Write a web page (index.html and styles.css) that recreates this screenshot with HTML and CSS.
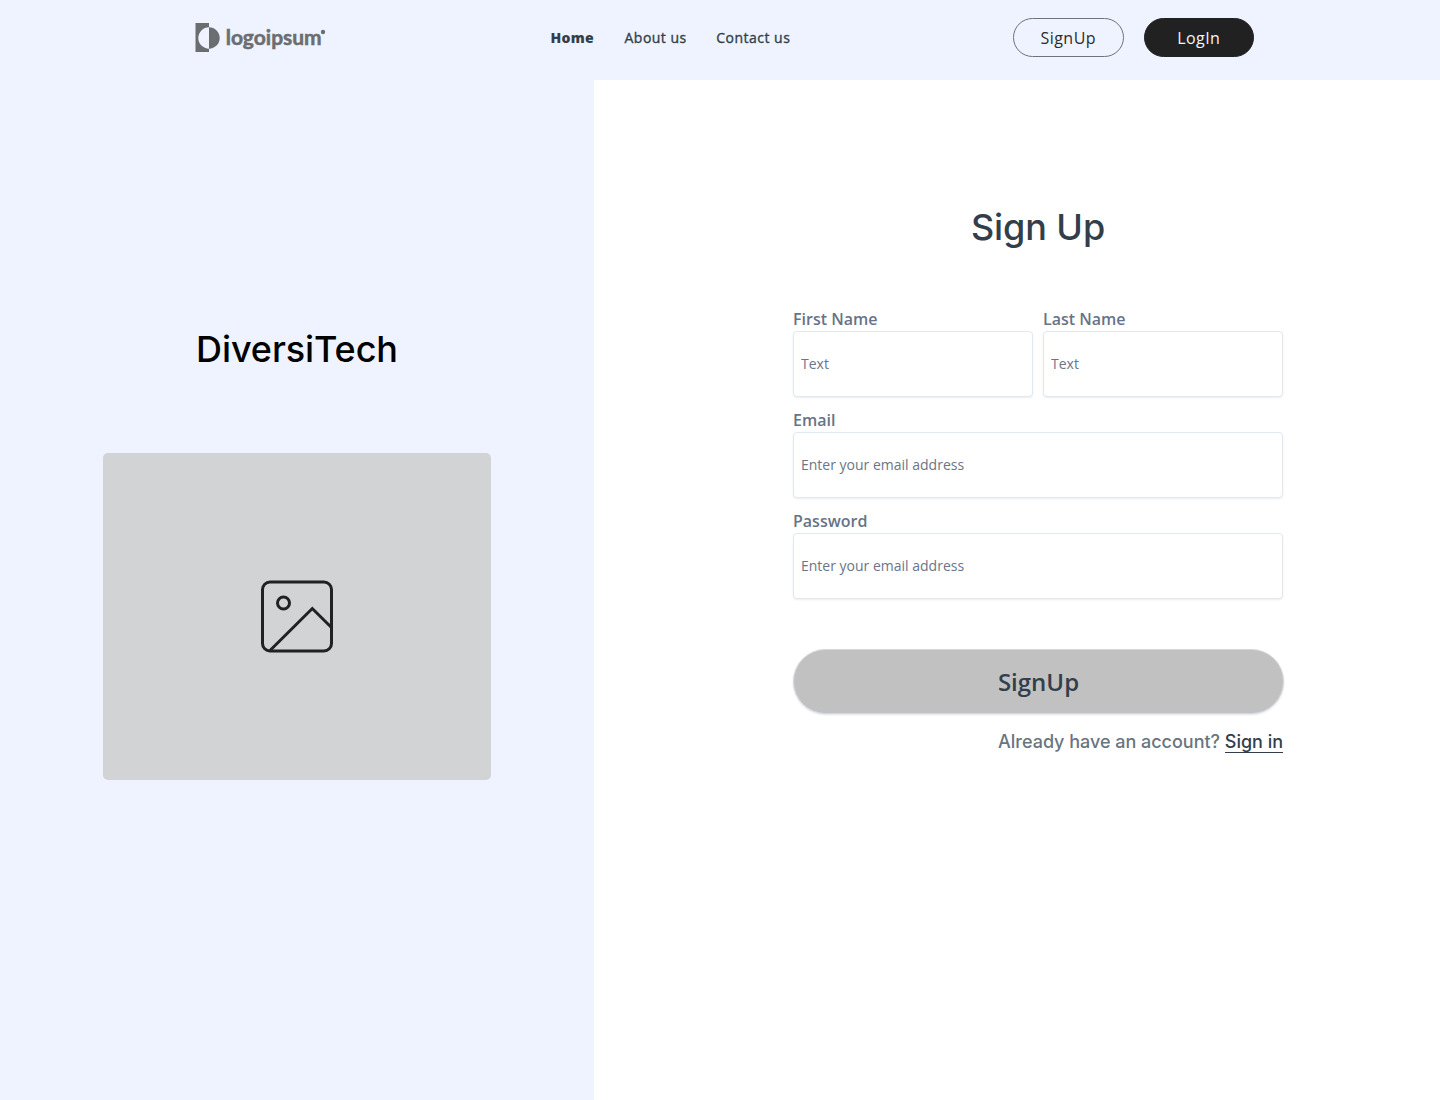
FILE: index.html
```html
<!DOCTYPE html>
<html lang="en">
<head>
<meta charset="utf-8">
<title>DiversiTech – Sign Up</title>
<link rel="stylesheet" href="styles.css">
</head>
<body>
<header class="header">
  <a class="logo" href="#">
    <svg width="132" height="32" viewBox="0 0 132 32" fill="#6b6e71">
      <path fill-rule="evenodd" d="M.5 1H14v4.3a10.7 10.7 0 0 0 0 21.4V30H.5z"/>
      <path d="M14 5.3a10.7 10.7 0 0 1 0 21.4z"/>
      <text class="logo-text" x="30.7" y="22.5" textLength="96" lengthAdjust="spacingAndGlyphs">logoipsum</text>
      <circle cx="128" cy="10" r="2.2"/>
    </svg>
  </a>
  <nav class="nav">
    <a class="nav-link nav-home" href="#">Home</a>
    <a class="nav-link nav-about" href="#">About us</a>
    <a class="nav-link" href="#">Contact us</a>
  </nav>
  <div class="actions">
    <a class="pill" href="#">SignUp</a>
    <a class="pill pill-dark" href="#">LogIn</a>
  </div>
</header>
<main class="main">
  <section class="brand">
    <h1 class="brand-title">DiversiTech</h1>
    <div class="placeholder">
      <svg width="74" height="75" viewBox="0 0 74 75" fill="none" stroke="#212121" stroke-width="3">
        <rect x="2.5" y="3" width="69" height="69" rx="7.5"/>
        <circle cx="23.5" cy="24" r="6"/>
        <path d="M10 71.5L52.3 29.5 71.5 48.5"/>
      </svg>
    </div>
  </section>
  <section class="signup">
    <h2 class="title">Sign Up</h2>
    <form class="form">
      <div class="row">
        <label class="field">First Name<input class="input" type="text" placeholder="Text"></label>
        <label class="field">Last Name<input class="input" type="text" placeholder="Text"></label>
      </div>
      <label class="field">Email<input class="input" type="email" placeholder="Enter your email address"></label>
      <label class="field">Password<input class="input" type="password" placeholder="Enter your email address"></label>
      <button class="submit" type="button">SignUp</button>
      <p class="signin">Already have an account? <a class="signin-link" href="#">Sign in</a></p>
    </form>
  </section>
</main>
</body>
</html>
```
FILE: styles.css
```css
* { box-sizing: border-box; }
body {
  margin: 0;
  height: 1100px;
  display: flex;
  flex-direction: column;
  background: #fff;
  color: #323f4b;
  font-family: "Open Sans", sans-serif;
}
a { color: inherit; text-decoration: none; }
.header {
  height: 80px;
  padding: 18px 186px 0 195px;
  display: flex;
  align-items: flex-start;
  background: #eef3ff;
}
.logo { width: 355.5px; padding-top: 4px; }
.logo svg { display: block; }
.logo-text { font: 700 21px Lato, sans-serif; stroke: #6b6e71; stroke-width: 0.5px; }
.nav {
  display: flex;
  padding-top: 10px;
  font-size: 14px;
  line-height: 20px;
}
.nav-link { white-space: nowrap; font-weight: 400; letter-spacing: 0.48px; -webkit-text-stroke: 0.35px; }
.nav-home { width: 74px; font-weight: 800; letter-spacing: 0.3px; -webkit-text-stroke: 0; }
.nav-about { width: 91.8px; }
.actions { display: flex; gap: 20px; margin-left: auto; }
.pill {
  width: 110.5px;
  height: 39px;
  border: 1px solid #6f7278;
  border-radius: 20px;
  font-size: 16px;
  line-height: 38px;
  letter-spacing: 0.45px;
  text-align: center;
  color: #2b2b2b;
}
.pill-dark { background: #212121; border-color: #212121; color: #f4f4f4; }
.main { flex: 1; display: flex; }
.brand {
  width: 594px;
  padding-top: 245px;
  display: flex;
  flex-direction: column;
  align-items: center;
  background: #eef3ff;
}
.brand-title {
  margin: 0 0 80px;
  font: 500 36px/48px Inter, sans-serif;
  letter-spacing: -0.1px;
  color: #000;
}
.placeholder {
  width: 388px;
  height: 327px;
  border-radius: 5px;
  background: #d1d3d4;
  display: flex;
  align-items: center;
  justify-content: center;
}
.signup { flex: 1; padding: 123px 157px 0 199px; }
.title {
  margin: 0 0 56px;
  font: 500 36px/48px Inter, sans-serif;
  letter-spacing: -0.1px;
  text-align: center;
}
.form { display: flex; flex-direction: column; gap: 11px; }
.row { display: flex; gap: 10px; }
.field {
  flex: 1;
  display: flex;
  flex-direction: column;
  font-size: 16px;
  line-height: 24px;
  font-weight: 600;
  color: #687387;
}
.input {
  width: 100%;
  height: 66px;
  padding: 0 7px 2px;
  border: 1px solid #e2e8f0;
  border-radius: 4px;
  box-shadow: 0 1px 2px rgba(15, 23, 42, 0.08);
  font: 400 14px "Open Sans", sans-serif;
}
.input::placeholder { color: #6b7588; opacity: 1; }
.submit {
  height: 65px;
  margin: 39px -1px 0 0;
  border: 1px solid #d4d9e1;
  border-radius: 33px;
  background: #c1c1c1;
  box-shadow: 0 1px 2px rgba(15, 23, 42, 0.12);
  color: #323f4b;
  font: 600 24px "Open Sans", sans-serif;
}
.signin {
  margin: 4px 0 0;
  text-align: right;
  font: 500 18px/26px Inter, sans-serif;
  letter-spacing: -0.02px;
  color: #687580;
}
.signin-link { border-bottom: 1px solid #323f4b; color: #323f4b; display: inline-block; line-height: 20px; }
```
